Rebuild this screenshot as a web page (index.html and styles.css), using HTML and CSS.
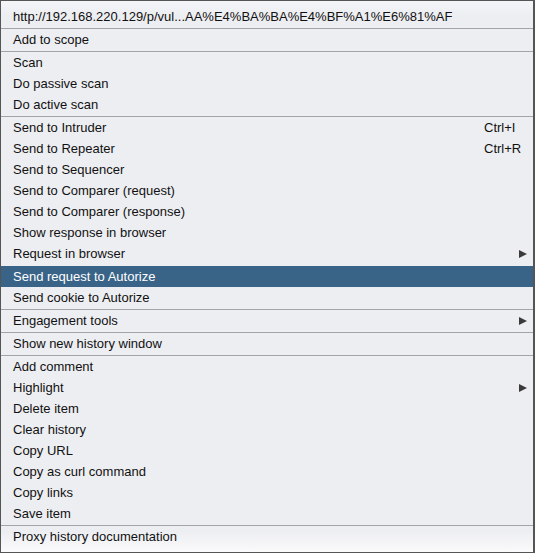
FILE: index.html
```html
<!DOCTYPE html>
<html>
<head>
<meta charset="utf-8">
<link rel="stylesheet" href="styles.css">
</head>
<body>
<div class="menu">
  <div class="item header"><span class="label">http://192.168.220.129/p/vul...AA%E4%BA%BA%E4%BF%A1%E6%81%AF</span></div>
  <div class="sep"></div>
  <div class="item"><span class="label">Add to scope</span></div>
  <div class="sep"></div>
  <div class="item"><span class="label">Scan</span></div>
  <div class="item"><span class="label">Do passive scan</span></div>
  <div class="item"><span class="label">Do active scan</span></div>
  <div class="sep"></div>
  <div class="item"><span class="label">Send to Intruder</span><span class="accel">Ctrl+I</span></div>
  <div class="item"><span class="label">Send to Repeater</span><span class="accel">Ctrl+R</span></div>
  <div class="item"><span class="label">Send to Sequencer</span></div>
  <div class="item"><span class="label">Send to Comparer (request)</span></div>
  <div class="item"><span class="label">Send to Comparer (response)</span></div>
  <div class="item"><span class="label">Show response in browser</span></div>
  <div class="item"><span class="label">Request in browser</span><span class="arrow"></span></div>
  <div class="gap"></div>
  <div class="item active"><span class="label">Send request to Autorize</span></div>
  <div class="item"><span class="label">Send cookie to Autorize</span></div>
  <div class="sep"></div>
  <div class="item"><span class="label">Engagement tools</span><span class="arrow"></span></div>
  <div class="sep"></div>
  <div class="item"><span class="label">Show new history window</span></div>
  <div class="sep"></div>
  <div class="item"><span class="label">Add comment</span></div>
  <div class="item"><span class="label">Highlight</span><span class="arrow"></span></div>
  <div class="item"><span class="label">Delete item</span></div>
  <div class="item"><span class="label">Clear history</span></div>
  <div class="item"><span class="label">Copy URL</span></div>
  <div class="item"><span class="label">Copy as curl command</span></div>
  <div class="item"><span class="label">Copy links</span></div>
  <div class="item"><span class="label">Save item</span></div>
  <div class="sep"></div>
  <div class="item"><span class="label">Proxy history documentation</span></div>
</div>
</body>
</html>
```
FILE: styles.css
```css
html, body {
  margin: 0;
  padding: 0;
  background: #edeef2;
}
.menu {
  box-sizing: border-box;
  width: 535px;
  height: 553px;
  border: 1px solid #555555;
  border-right-width: 2px;
  padding: 5px 0 4px 0;
  background: linear-gradient(to bottom, #f4f5f8 0px, #edeef2 14px, #edeef2 530px, #fafafb 551px);
  display: flex;
  flex-direction: column;
  font-family: "Liberation Sans", Arial, sans-serif;
  font-size: 13px;
  color: #111111;
}
.item {
  height: 21px;
  display: flex;
  align-items: center;
  padding: 0 12px 0 12px;
  flex: none;
}
.label {
  flex: 1;
  white-space: nowrap;
}
.accel {
  width: 37px;
  white-space: nowrap;
}
.item.active {
  background: #396488;
  color: #ffffff;
}
.sep {
  flex: none;
  height: 1px;
  border-bottom: 1px solid #a3a4a7;
}
.gap {
  flex: none;
  height: 2px;
}
.arrow {
  width: 0;
  height: 0;
  border-top: 4px solid transparent;
  border-bottom: 4px solid transparent;
  border-left: 8px solid #3a3a3a;
  margin-right: -6px;
}
```
